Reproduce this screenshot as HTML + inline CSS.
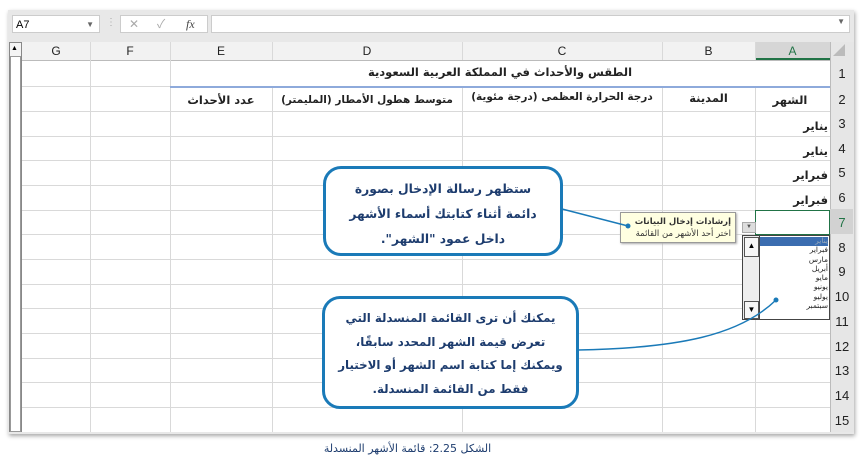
<!DOCTYPE html>
<html><head><meta charset="utf-8"><style>
body{margin:0;width:866px;height:466px;background:#fff;position:relative;overflow:hidden;font-family:"Liberation Sans","Noto Sans CJK SC",sans-serif}
.a{position:absolute}
.hl{position:absolute;height:1px;background:#d9d9d9}
.vl{position:absolute;width:1px;background:#d9d9d9}
.ch{position:absolute;top:42px;height:18px;font-size:12px;text-align:center;line-height:18px;color:#222}
.rn{position:absolute;left:831px;width:22px;font-size:13px;text-align:center;color:#222}
.ar{font-family:"DejaVu Sans",sans-serif;font-weight:bold;font-size:11.5px;color:#222;direction:rtl;position:absolute;white-space:nowrap}
.co{position:absolute;border:3px solid #1a7ab8;border-radius:18px;background:#fff;box-sizing:border-box;direction:rtl;text-align:center;font-family:"DejaVu Sans",sans-serif;font-weight:bold;color:#1d3c6e;font-size:12.3px;white-space:nowrap}
</style></head><body>
<div class="a" style="left:8px;top:10px;width:846px;height:424px;background:#e8e8e8;box-shadow:1px 2px 4px rgba(0,0,0,.35)"></div>
<div class="a" style="left:12px;top:15px;width:88px;height:18px;background:#fff;border:1px solid #ccc;font-size:11px;line-height:18px;padding-left:3px;box-sizing:border-box">A7<span style="position:absolute;right:5px;font-size:8px;color:#666">▼</span></div>
<div class="a" style="left:106px;top:17px;color:#aaa;font-size:10px">⋮</div>
<div class="a" style="left:120px;top:15px;width:88px;height:18px;background:#fff;border:1px solid #ccc;box-sizing:border-box;font-size:12px;line-height:16px;color:#aaa"><span style="position:absolute;left:8px">✕</span><span style="position:absolute;left:36px">✓</span><span style="position:absolute;left:65px;color:#444;font-style:italic;font-family:'Liberation Serif',serif">fx</span></div>
<div class="a" style="left:211px;top:15px;width:639px;height:18px;background:#fff;border:1px solid #ccc;box-sizing:border-box"><span style="position:absolute;right:4px;top:1px;font-size:8px;color:#666">▼</span></div>
<div class="a" style="left:22px;top:60px;width:808px;height:372px;background:#fff"></div>
<div class="a" style="left:22px;top:42px;width:808px;height:18px;background:#f2f2f2;border-bottom:1px solid #bbb"></div>
<div class="a" style="left:755px;top:42px;width:75px;height:18px;background:#d6d6d6;border-bottom:2px solid #217346;box-sizing:border-box"></div>
<div class="a" style="left:830px;top:42px;width:23px;height:390px;background:#e6e6e6;border-left:1px solid #bbb"></div>
<div class="a" style="left:833px;top:44px;width:0;height:0;border-left:12px solid transparent;border-bottom:12px solid #bbb"></div>
<div class="a" style="left:830px;top:209px;width:23px;height:25px;background:#d2d2d2"></div>
<div class="a" style="left:9px;top:42px;width:13px;height:390px;background:#f4f4f4;border:1px solid #888;box-sizing:border-box"></div>
<div class="a" style="left:11px;top:45px;font-size:7px">▲</div>
<div class="a" style="left:10px;top:56px;width:11px;height:376px;background:#fff;border:1px solid #999;box-sizing:border-box"></div>
<div class="ch" style="left:22px;width:68px">G</div>
<div class="ch" style="left:90px;width:80px">F</div>
<div class="ch" style="left:170px;width:102px">E</div>
<div class="ch" style="left:272px;width:190px">D</div>
<div class="ch" style="left:462px;width:200px">C</div>
<div class="ch" style="left:662px;width:93px">B</div>
<div class="ch" style="left:755px;width:75px;color:#217346">A</div>
<div class="vl" style="left:90px;top:42px;height:390px"></div>
<div class="vl" style="left:170px;top:42px;height:390px"></div>
<div class="vl" style="left:272px;top:42px;height:18px"></div>
<div class="vl" style="left:272px;top:87px;height:345px"></div>
<div class="vl" style="left:462px;top:42px;height:18px"></div>
<div class="vl" style="left:462px;top:87px;height:345px"></div>
<div class="vl" style="left:662px;top:42px;height:18px"></div>
<div class="vl" style="left:662px;top:87px;height:345px"></div>
<div class="vl" style="left:755px;top:42px;height:18px"></div>
<div class="vl" style="left:755px;top:87px;height:345px"></div>
<div class="hl" style="left:22px;width:808px;top:86px"></div>
<div class="hl" style="left:22px;width:808px;top:111px"></div>
<div class="hl" style="left:22px;width:808px;top:136px"></div>
<div class="hl" style="left:22px;width:808px;top:160px"></div>
<div class="hl" style="left:22px;width:808px;top:185px"></div>
<div class="hl" style="left:22px;width:808px;top:210px"></div>
<div class="hl" style="left:22px;width:808px;top:234px"></div>
<div class="hl" style="left:22px;width:808px;top:259px"></div>
<div class="hl" style="left:22px;width:808px;top:284px"></div>
<div class="hl" style="left:22px;width:808px;top:308px"></div>
<div class="hl" style="left:22px;width:808px;top:333px"></div>
<div class="hl" style="left:22px;width:808px;top:358px"></div>
<div class="hl" style="left:22px;width:808px;top:382px"></div>
<div class="hl" style="left:22px;width:808px;top:407px"></div>
<div class="a" style="left:170px;width:660px;top:86px;height:2px;background:#8eaadb"></div>
<div class="rn" style="top:66px">1</div><div class="rn" style="top:92px">2</div><div class="rn" style="top:116px">3</div><div class="rn" style="top:141px">4</div><div class="rn" style="top:165px">5</div><div class="rn" style="top:190px">6</div><div class="rn" style="top:215px;color:#217346">7</div><div class="rn" style="top:240px">8</div><div class="rn" style="top:264px">9</div><div class="rn" style="top:289px">10</div><div class="rn" style="top:314px">11</div><div class="rn" style="top:339px">12</div><div class="rn" style="top:363px">13</div><div class="rn" style="top:388px">14</div><div class="rn" style="top:413px">15</div>
<div class="ar" style="left:170px;width:660px;top:65px;text-align:center">الطقس والأحداث في المملكة العربية السعودية</div>
<div class="ar" style="left:755px;width:70px;top:93px;text-align:center">الشهر</div>
<div class="ar" style="left:662px;width:93px;top:91px;text-align:center">المدينة</div>
<div class="ar" style="left:462px;width:200px;top:91px;text-align:center;font-size:10.5px">درجة الحرارة العظمى (درجة مئوية)</div>
<div class="ar" style="left:272px;width:190px;top:94px;text-align:center;font-size:10.5px">متوسط هطول الأمطار (المليمتر)</div>
<div class="ar" style="left:170px;width:102px;top:93px;text-align:center">عدد الأحداث</div>
<div class="ar" style="left:760px;width:68px;top:119px;text-align:right">يناير</div>
<div class="ar" style="left:760px;width:68px;top:144px;text-align:right">يناير</div>
<div class="ar" style="left:760px;width:68px;top:168px;text-align:right">فبراير</div>
<div class="ar" style="left:760px;width:68px;top:193px;text-align:right">فبراير</div>
<div class="a" style="left:755px;top:210px;width:75px;height:25px;border:1.5px solid #217346;box-sizing:border-box"></div>
<div class="a" style="left:742px;top:222px;width:14px;height:11px;background:#ddd;border:1px solid #aaa;box-sizing:border-box;font-size:6px;text-align:center;line-height:9px;color:#555">▼</div>
<div class="a" style="left:620px;top:212px;width:116px;height:31px;background:#ffffe1;border:1px solid #999;box-sizing:border-box;box-shadow:1px 1px 2px #aaa;direction:rtl;font-family:'DejaVu Sans',sans-serif;font-size:8.5px;padding:3px 4px;line-height:12px;color:#333;white-space:nowrap"><b>إرشادات إدخال البيانات</b><br>اختر أحد الأشهر من القائمة</div>
<div class="a" style="left:742px;top:235px;width:88px;height:85px;background:#fff;border:1px solid #444;box-sizing:border-box;overflow:hidden">
 <div class="a" style="left:0;top:0;width:16px;height:83px;background:#eee;border-right:1px solid #444"></div>
 <div class="a" style="left:1px;top:1px;width:13px;height:18px;border:1px solid #555;background:#f6f6f6;font-size:8px;text-align:center;line-height:16px">▲</div>
 <div class="a" style="left:1px;top:65px;width:13px;height:16px;border:1px solid #555;background:#f6f6f6;font-size:8px;text-align:center;line-height:16px">▼</div>
 <div class="a" style="left:17px;top:1px;width:68px;height:9px;background:#3b6db0"></div>
 <div class="a" style="left:17px;top:0;width:68px;direction:rtl;text-align:right;font-family:'DejaVu Sans',sans-serif;font-size:7.5px;line-height:9.3px;color:#222"><span style="color:#9ab">يناير</span><br>فبراير<br>مارس<br>أبريل<br>مايو<br>يونيو<br>يوليو<br>سبتمبر</div>
</div>
<svg class="a" style="left:0;top:0" width="866" height="466">
<path d="M562 209 L628 226" stroke="#1a7ab8" stroke-width="1.5" fill="none"/>
<circle cx="628" cy="226" r="2.5" fill="#1a7ab8"/>
<path d="M578 350 C680 348 740 335 776 300" stroke="#1a7ab8" stroke-width="1.5" fill="none"/>
<circle cx="776" cy="300" r="2.5" fill="#1a7ab8"/>
</svg>
<div class="co" style="left:323px;top:166px;width:240px;height:90px;padding-top:8px;line-height:25px">ستظهر رسالة الإدخال بصورة<br>دائمة أثناء كتابتك أسماء الأشهر<br>داخل عمود "الشهر".</div>
<div class="co" style="left:322px;top:296px;width:257px;height:113px;padding-top:8px;line-height:23.5px;font-size:11.8px">يمكنك أن ترى القائمة المنسدلة التي<br>تعرض قيمة الشهر المحدد سابقًا،<br>ويمكنك إما كتابة اسم الشهر أو الاختيار<br>فقط من القائمة المنسدلة.</div>
<div class="a" style="left:300px;top:442px;width:215px;direction:rtl;text-align:center;font-family:'DejaVu Sans',sans-serif;font-size:11px;color:#1d3c6e">الشكل 2.25: قائمة الأشهر المنسدلة</div>
</body></html>
